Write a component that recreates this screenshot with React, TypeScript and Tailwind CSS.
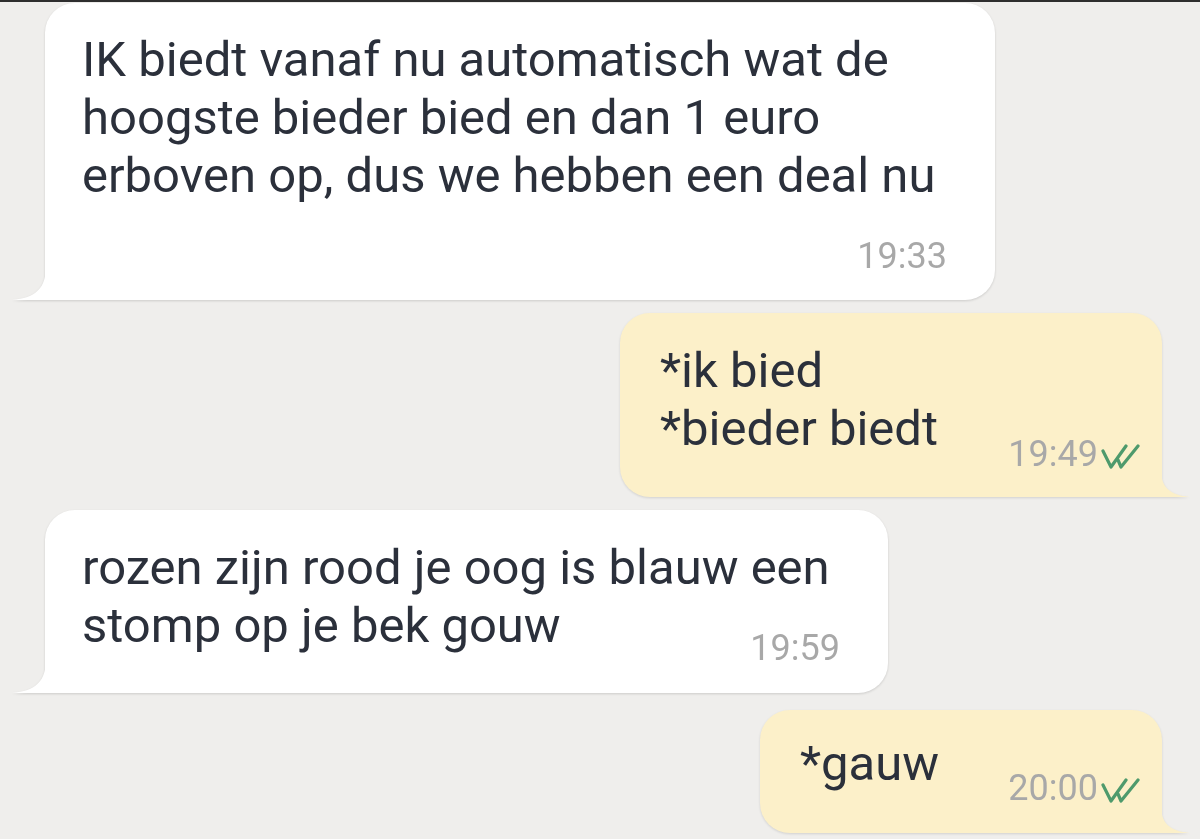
import React from "react";

const font = { fontFamily: "Roboto, 'Noto Sans', Arial, sans-serif" };

function Ticks() {
  return (
    <svg width="42" height="26" viewBox="0 0 42 26" className="ml-[2px] mb-[4px]" fill="none">
      <path d="M3 7 L11 23 L26 2" stroke="#4e9a6c" strokeWidth="3.2" strokeLinecap="round" strokeLinejoin="round" />
      <path d="M18 16 L21 23 L38 2" stroke="#4e9a6c" strokeWidth="3.2" strokeLinecap="round" strokeLinejoin="round" />
    </svg>
  );
}

function TailLeft({ color }: { color: string }) {
  return (
    <svg width="34" height="52" viewBox="0 0 34 52" className="absolute left-[-33px] bottom-0">
      <path d="M34 0 L34 18 C34 40 24 50 0 52 L34 52 Z" fill={color} />
    </svg>
  );
}

function TailRight({ color }: { color: string }) {
  return (
    <svg width="29" height="36" viewBox="0 0 29 36" className="absolute right-[-28px] bottom-0">
      <path d="M0 0 L0 8 C0 26 8 34 29 36 L0 36 Z" fill={color} />
    </svg>
  );
}

export default function App() {
  return (
    <div className="w-[1200px] h-[839px] bg-[#efeeec] border-t-2 border-[#2e2e2e] overflow-hidden flex flex-col" style={font}>
      {/* Bubble 1 */}
      <div className="ml-[45px] mt-[1px] relative w-[950px] drop-shadow-[0_1.5px_1px_rgba(0,0,0,0.14)]">
        <div className="bg-white rounded-[30px] rounded-bl-none pl-[37px] pr-[48px] pt-[28px] pb-[24px] flex flex-col">
          <div className="text-[49px] leading-[58px] text-[#2b303b] whitespace-nowrap">
            IK biedt vanaf nu automatisch wat de<br />
            hoogste bieder bied en dan 1 euro<br />
            erboven op, dus we hebben een deal nu
          </div>
          <div className="self-end mt-[31px] text-[36px] leading-[40px] text-[#a8a8a8]">19:33</div>
        </div>
        <TailLeft color="#ffffff" />
      </div>

      {/* Bubble 2 */}
      <div className="self-end mr-[38px] mt-[13px] relative w-[542px] drop-shadow-[0_1.5px_1px_rgba(0,0,0,0.12)]">
        <div className="bg-[#fcf0c9] rounded-[30px] rounded-br-none pl-[40px] pr-[20px] pt-[29px] pb-[23px] flex items-end">
          <div className="text-[49px] leading-[58px] text-[#2b303b] whitespace-nowrap mb-[16px]">
            *ik bied<br />
            *bieder biedt
          </div>
          <div className="ml-auto flex items-end">
            <span className="text-[36px] leading-[40px] text-[#a8a8a8]">19:49</span>
            <Ticks />
          </div>
        </div>
        <TailRight color="#fcf0c9" />
      </div>

      {/* Bubble 3 */}
      <div className="ml-[45px] mt-[13px] relative w-[843px] drop-shadow-[0_1.5px_1px_rgba(0,0,0,0.14)]">
        <div className="bg-white rounded-[30px] rounded-bl-none pl-[37px] pr-[48px] pt-[29px] pb-[25px] flex flex-col">
          <div className="text-[49px] leading-[58px] text-[#2b303b] whitespace-nowrap">
            rozen zijn rood je oog is blauw een<br />
            stomp op je bek gouw
          </div>
          <div className="self-end -mt-[27px] text-[36px] leading-[40px] text-[#a8a8a8]">19:59</div>
        </div>
        <TailLeft color="#ffffff" />
      </div>

      {/* Bubble 4 */}
      <div className="self-end mr-[38px] mt-[17px] relative w-[402px] drop-shadow-[0_1.5px_1px_rgba(0,0,0,0.12)]">
        <div className="bg-[#fcf0c9] rounded-[30px] rounded-br-none pl-[40px] pr-[20px] pt-[25px] pb-[25px] flex items-end">
          <div className="text-[49px] leading-[58px] text-[#2b303b] whitespace-nowrap mb-[15px]">*gauw</div>
          <div className="ml-auto flex items-end">
            <span className="text-[36px] leading-[40px] text-[#a8a8a8]">20:00</span>
            <Ticks />
          </div>
        </div>
        <TailRight color="#fcf0c9" />
      </div>
    </div>
  );
}
